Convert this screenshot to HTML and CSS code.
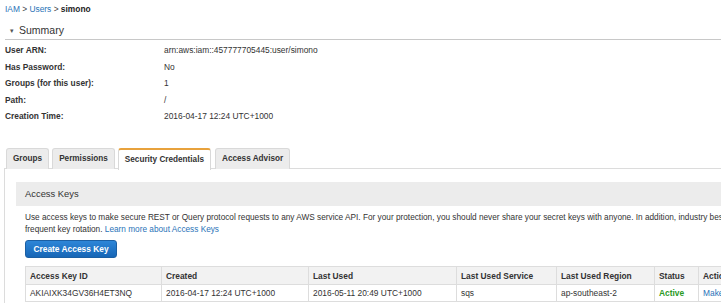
FILE: index.html
```html
<!DOCTYPE html>
<html>
<head>
<meta charset="utf-8">
<link rel="stylesheet" href="styles.css">
</head>
<body>
<div class="page">
  <div class="breadcrumb"><a class="link">IAM</a> &gt; <a class="link">Users</a> &gt; <b>simono</b></div>
  <div class="summary-head"><span class="caret">&#9662;</span>Summary</div>
  <div class="summary">
    <div class="label">User ARN:</div><div class="value">arn:aws:iam::457777705445:user/simono</div>
    <div class="label">Has Password:</div><div class="value">No</div>
    <div class="label">Groups (for this user):</div><div class="value">1</div>
    <div class="label">Path:</div><div class="value">/</div>
    <div class="label">Creation Time:</div><div class="value">2016-04-17 12:24 UTC+1000</div>
  </div>
  <div class="tabs">
    <div class="tab">Groups</div>
    <div class="tab">Permissions</div>
    <div class="tab active">Security Credentials</div>
    <div class="tab">Access Advisor</div>
  </div>
  <div class="tab-body">
    <div class="section-head">Access Keys</div>
    <div class="section-body">
      <p class="desc">Use access keys to make secure REST or Query protocol requests to any AWS service API. For your protection, you should never share your secret keys with anyone. In addition, industry best practice recommends frequent key rotation. <a class="link">Learn more about Access Keys</a></p>
      <button class="btn">Create Access Key</button>
      <table class="keys">
        <thead>
          <tr>
            <th class="c1">Access Key ID</th>
            <th class="c2">Created</th>
            <th class="c3">Last Used</th>
            <th class="c4">Last Used Service</th>
            <th class="c5">Last Used Region</th>
            <th class="c6">Status</th>
            <th class="c7">Actions</th>
          </tr>
        </thead>
        <tbody>
          <tr>
            <td>AKIAIXK34GV36H4ET3NQ</td>
            <td>2016-04-17 12:24 UTC+1000</td>
            <td>2016-05-11 20:49 UTC+1000</td>
            <td>sqs</td>
            <td>ap-southeast-2</td>
            <td class="active-status">Active</td>
            <td><a class="link">Make Inactive</a></td>
          </tr>
        </tbody>
      </table>
    </div>
  </div>
</div>
</body>
</html>
```
FILE: styles.css
```css
html, body {
  margin: 0;
  padding: 0;
  background: #fff;
  overflow: hidden;
}
body {
  font-family: "Liberation Sans", Arial, sans-serif;
  font-size: 8.4px;
  color: #333;
}
.page {
  width: 860px;
}
.link {
  color: #2a73b8;
  text-decoration: none;
}
.breadcrumb {
  padding-left: 5px;
  height: 18px;
  line-height: 18px;
  color: #444;
}
.breadcrumb b {
  color: #222;
}
.summary-head {
  margin: 4px 0 0 5px;
  height: 17px;
  line-height: 17px;
  font-size: 10.5px;
  color: #333;
  border-bottom: 1px solid #c8c8c8;
}
.caret {
  display: inline-block;
  font-size: 7px;
  width: 9px;
  padding-left: 5px;
  vertical-align: top;
  color: #555;
}
.summary {
  display: grid;
  grid-template-columns: 159px auto;
  grid-auto-rows: 16.5px;
  margin: 2px 0 0 5px;
  line-height: 16.5px;
}
.label {
  font-weight: bold;
  color: #333;
}
.value {
  color: #333;
}
.tabs {
  display: flex;
  margin: 23.5px 0 0 6px;
  height: 21px;
  position: relative;
  z-index: 1;
}
.tab {
  height: 20px;
  line-height: 20px;
  padding: 0 6px;
  margin-right: 3px;
  background: #ececec;
  border: 1px solid #d9d9d9;
  border-bottom: none;
  border-radius: 3px 3px 0 0;
  font-size: 8.2px;
  font-weight: bold;
  color: #333;
}
.tab.active {
  background: #fff;
  border-top: 2px solid #e8a23c;
  height: 20px;
  line-height: 19px;
  margin-right: 4px;
}
.tab-body {
  margin: -1px 0 0 4px;
  border: 1px solid #dcdcdc;
  border-right: none;
  padding: 13px 0 0 11px;
  height: 200px;
}
.section-head {
  background: #ececec;
  height: 24px;
  line-height: 24px;
  padding-left: 9px;
  font-size: 9.4px;
  color: #333;
}
.section-body {
  padding: 6px 0 0 9px;
}
.desc {
  margin: 0;
  line-height: 12px;
  font-size: 8.25px;
  width: 800px;
  color: #333;
}
.btn {
  display: block;
  margin-top: 4px;
  width: 92px;
  height: 18px;
  padding: 0;
  border: 1px solid #1b5fa3;
  border-radius: 3px;
  background: linear-gradient(#2d86d8, #1766b6);
  color: #fff;
  font-family: "Liberation Sans", Arial, sans-serif;
  font-size: 8.4px;
  font-weight: bold;
}
.keys {
  margin-top: 8px;
  border-collapse: collapse;
  width: 760px;
  table-layout: fixed;
}
.keys th, .keys td {
  box-sizing: border-box;
  border: 1px solid #dddddd;
  padding: 0 4px;
  text-align: left;
  white-space: nowrap;
  overflow: hidden;
}
.keys th {
  height: 18px;
  background: #f2f2f2;
  font-weight: bold;
  color: #333;
}
.keys td {
  height: 17px;
  color: #333;
}
.c1 { width: 136px; }
.c2 { width: 147px; }
.c3 { width: 148px; }
.c4 { width: 100px; }
.c5 { width: 98px; }
.c6 { width: 44px; }
.c7 { width: 87px; }
.keys td.active-status {
  color: #2b9a1f;
  font-weight: bold;
}
```
